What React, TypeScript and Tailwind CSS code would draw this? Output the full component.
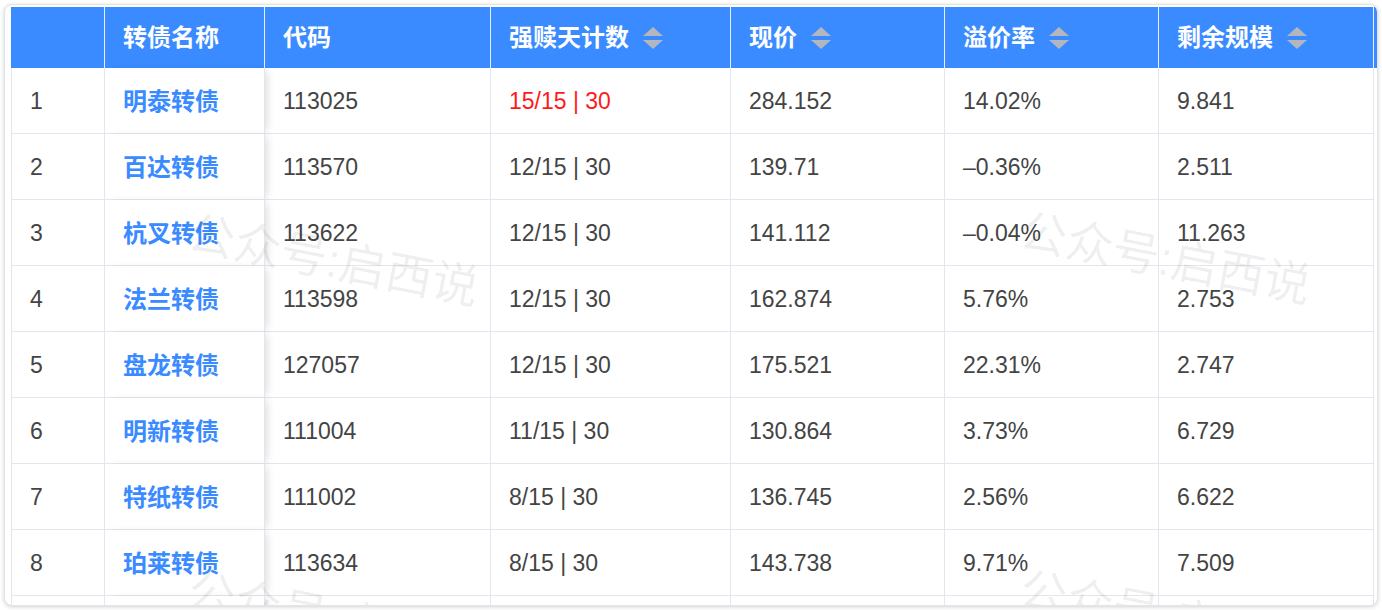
import React from "react";

const rows = [
  { no: 1, name: "明泰转债", code: "113025", days: "15/15 | 30", hot: true, price: "284.152", premium: "14.02%", size: "9.841" },
  { no: 2, name: "百达转债", code: "113570", days: "12/15 | 30", price: "139.71", premium: "–0.36%", size: "2.511" },
  { no: 3, name: "杭叉转债", code: "113622", days: "12/15 | 30", price: "141.112", premium: "–0.04%", size: "11.263" },
  { no: 4, name: "法兰转债", code: "113598", days: "12/15 | 30", price: "162.874", premium: "5.76%", size: "2.753" },
  { no: 5, name: "盘龙转债", code: "127057", days: "12/15 | 30", price: "175.521", premium: "22.31%", size: "2.747" },
  { no: 6, name: "明新转债", code: "111004", days: "11/15 | 30", price: "130.864", premium: "3.73%", size: "6.729" },
  { no: 7, name: "特纸转债", code: "111002", days: "8/15 | 30", price: "136.745", premium: "2.56%", size: "6.622" },
  { no: 8, name: "珀莱转债", code: "113634", days: "8/15 | 30", price: "143.738", premium: "9.71%", size: "7.509" },
  { no: 9, name: "天路转债", code: "110060", days: "7/15 | 30", price: "128.410", premium: "1.92%", size: "10.799" },
];

const headers = [
  { label: "", sort: false },
  { label: "转债名称", sort: false },
  { label: "代码", sort: false },
  { label: "强赎天计数", sort: true },
  { label: "现价", sort: true },
  { label: "溢价率", sort: true },
  { label: "剩余规模", sort: true },
];

function SortIcon() {
  return (
    <svg width="20" height="24" viewBox="0 0 20 24" className="ml-[14px] shrink-0">
      <polygon points="10,1 20,10 0,10" fill="#b3b6bd" />
      <polygon points="0,14 20,14 10,23" fill="#b3b6bd" />
    </svg>
  );
}

function Watermark({ className }: { className: string }) {
  return (
    <div
      className={
        "pointer-events-none absolute z-[2] whitespace-nowrap text-[47px] leading-none text-black/[0.07] rotate-[11deg] " +
        className
      }
    >
      公众号:启西说
    </div>
  );
}

export default function App() {
  const cols = "grid grid-cols-[94px_160px_226px_240px_214px_214px_215px]";
  const cell = "flex items-center px-[18px] pt-[2px] border-r border-b border-[#e3e6f0]";

  return (
    <div
      className="w-[1382px] h-[610px] bg-white pt-[4px] pl-[4px]"
      style={{ fontFamily: '"Liberation Sans", "Noto Sans CJK SC", sans-serif' }}
    >
      <div className="relative w-[1374px] h-[602px] overflow-hidden rounded-[8px] border border-[#e4e4e4] shadow-[0_1px_4px_rgba(0,0,0,0.18)] bg-white pl-[6px] pt-[2px]">
        {/* header */}
        <div className={cols + " h-[61px] bg-[#3a8bff] text-white text-[24px] font-bold"}>
          {headers.map((h, i) => (
            <div key={i} className="flex items-center px-[18px] border-r border-[#e9eef8]">
              <span>{h.label}</span>
              {h.sort && <SortIcon />}
            </div>
          ))}
        </div>

        {/* body */}
        {rows.map((r) => (
          <div key={r.no} className={cols + " h-[66px] text-[23px] text-[#444]"}>
            <div className={cell + " border-l"}>{r.no}</div>
            <div className={cell + " relative z-[1] bg-white shadow-[5px_0_8px_-3px_rgba(0,0,0,0.14)]"}>
              <span className="text-[24px] text-[#3a8bff] font-semibold">{r.name}</span>
            </div>
            <div className={cell}>{r.code}</div>
            <div className={cell + (r.hot ? " text-[#ff1a1a]" : "")}>{r.days}</div>
            <div className={cell}>{r.price}</div>
            <div className={cell}>{r.premium}</div>
            <div className={cell}>{r.size}</div>
          </div>
        ))}

        <Watermark className="left-[181px] top-[232px]" />
        <Watermark className="left-[1013px] top-[230px]" />
        <Watermark className="left-[181px] top-[590px]" />
        <Watermark className="left-[1013px] top-[588px]" />
      </div>
    </div>
  );
}
